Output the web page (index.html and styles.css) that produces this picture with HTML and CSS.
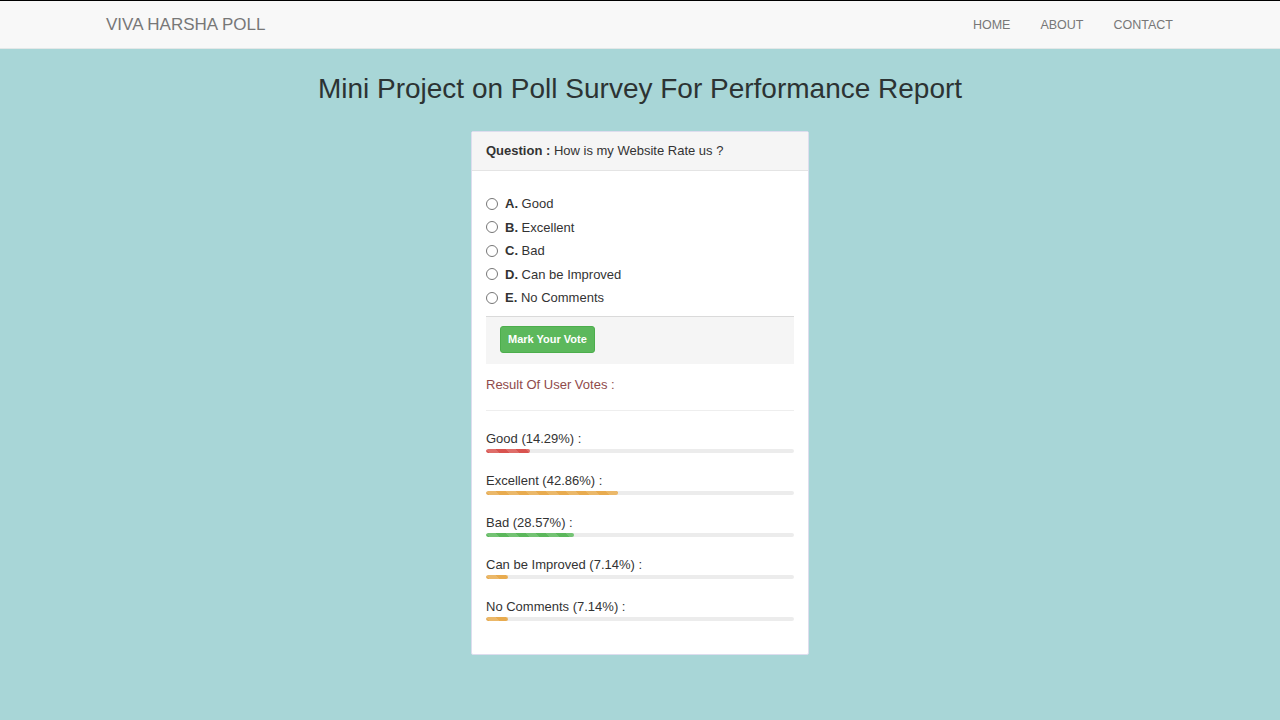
FILE: index.html
```html
<!DOCTYPE html>
<html lang="en">

<head>
    <meta charset="UTF-8">
    <meta name="viewport" content="width=device-width, initial-scale=1.0">
    <title>Viva Harsha Poll</title>
    <link rel="stylesheet" href="styles.css">
</head>

<body>

    <nav class="navbar">
        <div class="navbar-inner">
            <a class="brand" href="#">VIVA HARSHA POLL</a>
            <ul class="nav-links">
                <li><a href="#">HOME</a></li>
                <li><a href="#">ABOUT</a></li>
                <li><a href="#">CONTACT</a></li>
            </ul>
        </div>
    </nav>

    <h1 class="page-title">Mini Project on Poll Survey For Performance Report</h1>

    <div class="panel">
        <div class="panel-heading">
            <b>Question :</b> How is my Website Rate us ?
        </div>
        <div class="panel-body">
            <form id="poll-form">
                <label class="option"><input type="radio" name="vote" value="A"><b>A.</b>&nbsp;Good</label>
                <label class="option"><input type="radio" name="vote" value="B"><b>B.</b>&nbsp;Excellent</label>
                <label class="option"><input type="radio" name="vote" value="C"><b>C.</b>&nbsp;Bad</label>
                <label class="option"><input type="radio" name="vote" value="D"><b>D.</b>&nbsp;Can be Improved</label>
                <label class="option"><input type="radio" name="vote" value="E"><b>E.</b>&nbsp;No Comments</label>
                <div class="well">
                    <input type="submit" class="btn-vote" value="Mark Your Vote">
                </div>
            </form>

            <div class="result-title">Result Of User Votes :</div>
            <hr>

            <div class="result">
                <div class="result-label">Good (14.29%) :</div>
                <div class="progress"><div class="bar bar-red" style="width: 14.29%"></div></div>
            </div>
            <div class="result">
                <div class="result-label">Excellent (42.86%) :</div>
                <div class="progress"><div class="bar bar-orange" style="width: 42.86%"></div></div>
            </div>
            <div class="result">
                <div class="result-label">Bad (28.57%) :</div>
                <div class="progress"><div class="bar bar-green" style="width: 28.57%"></div></div>
            </div>
            <div class="result">
                <div class="result-label">Can be Improved (7.14%) :</div>
                <div class="progress"><div class="bar bar-orange" style="width: 7.14%"></div></div>
            </div>
            <div class="result">
                <div class="result-label">No Comments (7.14%) :</div>
                <div class="progress"><div class="bar bar-orange" style="width: 7.14%"></div></div>
            </div>
        </div>
    </div>

</body>

</html>
```

FILE: styles.css
```css
body {
    margin: 0;
    background-color: #a8d6d7;
    font-family: "Liberation Sans", Arial, sans-serif;
    font-size: 13px;
    color: #333;
}

.navbar {
    background-color: #f8f8f8;
    border-top: 1px solid #000;
    border-bottom: 1px solid #e3e8e8;
}

.navbar-inner {
    height: 47px;
    padding: 0 92px 0 106px;
    display: flex;
    align-items: center;
    justify-content: space-between;
}

.brand {
    color: #777;
    font-size: 17px;
    text-decoration: none;
}

.nav-links {
    list-style: none;
    margin: 0;
    padding: 0;
    display: flex;
}

.nav-links a {
    display: block;
    padding: 0 15px;
    color: #777;
    font-size: 12.5px;
    text-decoration: none;
}

.page-title {
    margin: 22px 0 0;
    text-align: center;
    font-size: 28px;
    font-weight: normal;
    line-height: 36px;
    color: #2c3333;
}

.panel {
    width: 336px;
    margin: 24px auto 0;
    background-color: #fff;
    border: 1px solid #dde;
    border-radius: 2px;
}

.panel-heading {
    height: 38px;
    line-height: 38px;
    padding: 0 14px;
    background-color: #f5f5f5;
    border-bottom: 1px solid #e4e4e4;
}

.panel-body {
    padding: 21px 14px 33px 14px;
}

.option {
    display: flex;
    align-items: center;
    height: 23.5px;
    cursor: pointer;
}

.option input {
    margin: 0 7px 0 0;
    width: 12px;
    height: 12px;
}

.well {
    margin-top: 6px;
    padding: 9px 14px 11px;
    background-color: #f5f5f5;
    border-top: 1px solid #dadada;
}

.btn-vote {
    background-color: #5cb85c;
    border: 1px solid #4cae4c;
    border-radius: 3px;
    color: #fff;
    font-family: "Liberation Sans", Arial, sans-serif;
    font-size: 11px;
    font-weight: bold;
    height: 27px;
    padding: 0 7px;
    cursor: pointer;
}

.result-title {
    margin-top: 12px;
    line-height: 18px;
    color: #8f4b4b;
}

hr {
    margin: 16px 0 0;
    border: 0;
    border-top: 1px solid #eee;
}

.result {
    margin-top: 20px;
}

.result-label {
    line-height: 16px;
}

.progress {
    height: 4px;
    margin-top: 2px;
    background-color: #ececec;
    border-radius: 3px;
    overflow: hidden;
}

.bar {
    height: 100%;
    border-radius: 3px;
    background-image: linear-gradient(45deg, rgba(255, 255, 255, .15) 25%, transparent 25%, transparent 50%, rgba(255, 255, 255, .15) 50%, rgba(255, 255, 255, .15) 75%, transparent 75%, transparent);
    background-size: 20px 20px;
}

.bar-red {
    background-color: #d9534f;
}

.bar-orange {
    background-color: #e8ab4f;
}

.bar-green {
    background-color: #5cb85c;
}
```
